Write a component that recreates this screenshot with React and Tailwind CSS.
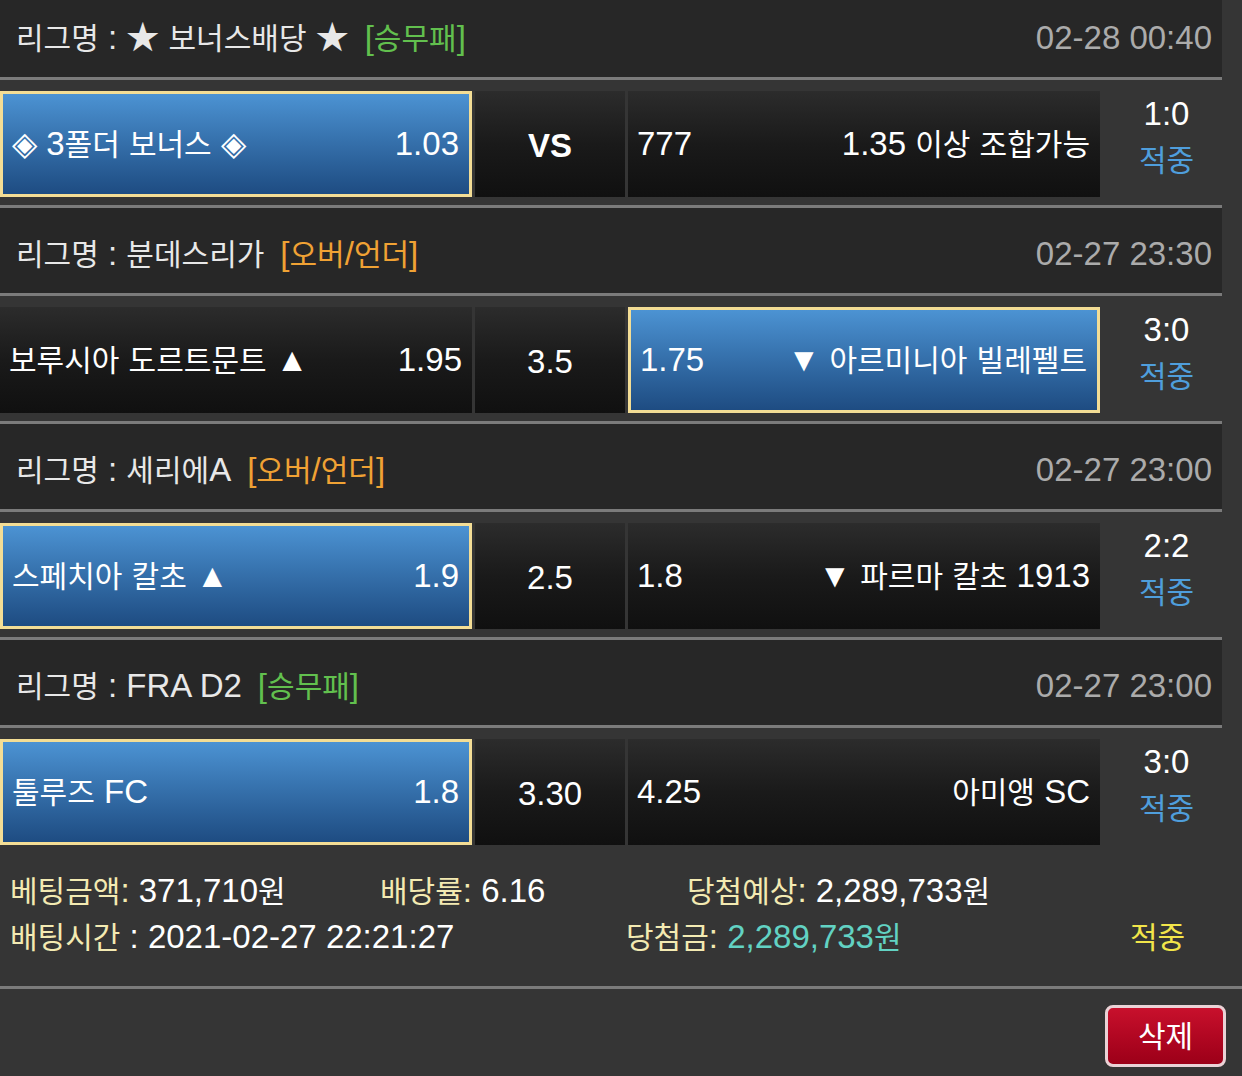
import React from "react";

const blocks = [
  {
    league: "★ 보너스배당 ★",
    type: "[승무패]",
    typeClass: "text-[#62c04e]",
    date: "02-28 00:40",
    home: "◈ 3폴더 보너스 ◈",
    homeOdd: "1.03",
    mid: "VS",
    awayOdd: "777",
    away: "1.35 이상 조합가능",
    score: "1:0",
    pick: "home",
  },
  {
    league: "분데스리가",
    type: "[오버/언더]",
    typeClass: "text-[#f0a234]",
    date: "02-27 23:30",
    home: "보루시아 도르트문트 ▲",
    homeOdd: "1.95",
    mid: "3.5",
    awayOdd: "1.75",
    away: "▼ 아르미니아 빌레펠트",
    score: "3:0",
    pick: "away",
  },
  {
    league: "세리에A",
    type: "[오버/언더]",
    typeClass: "text-[#f0a234]",
    date: "02-27 23:00",
    home: "스페치아 칼초 ▲",
    homeOdd: "1.9",
    mid: "2.5",
    awayOdd: "1.8",
    away: "▼ 파르마 칼초 1913",
    score: "2:2",
    pick: "home",
  },
  {
    league: "FRA D2",
    type: "[승무패]",
    typeClass: "text-[#62c04e]",
    date: "02-27 23:00",
    home: "툴루즈 FC",
    homeOdd: "1.8",
    mid: "3.30",
    awayOdd: "4.25",
    away: "아미앵 SC",
    score: "3:0",
    pick: "home",
  },
];

// hangul runs a bit smaller so widths come close to the narrow iOS glyphs
const Ko = ({ children }) => {
  const parts = String(children).split(/([\uAC00-\uD7A3]+)/);
  return parts.map((p, i) =>
    /[\uAC00-\uD7A3]/.test(p) ? (
      <span key={i} className="text-[30px]">
        {p}
      </span>
    ) : (
      <React.Fragment key={i}>{p}</React.Fragment>
    )
  );
};

const Cell = ({ active, left, right, className = "" }) => (
  <div
    className={
      "flex h-[106px] items-center justify-between text-white " +
      (active
        ? "border-[3px] border-[#f3dd95] bg-linear-to-b from-[#4c93d3] to-[#1e4c82] pl-[9px] pr-[10px] "
        : "bg-linear-to-b from-[#2c2c2c] via-[#1a1a1a] to-[#101010] pl-[9px] pr-[10px] ") +
      className
    }
  >
    <span>
      <Ko>{left}</Ko>
    </span>
    <span>
      <Ko>{right}</Ko>
    </span>
  </div>
);

const Sep = () => <div className="h-[3px] w-[1222px] bg-[#7b7b7b]" />;

const Block = ({ b, last }) => (
  <div>
    {/* league header */}
    <div className="flex h-[85px] w-[1222px] items-center justify-between bg-[#272727] pl-4 pr-[10px] pt-[7px]">
      <div className="text-[#e8e8e8]">
        <Ko>{"리그명 : " + b.league}</Ko>
        <span className={"ml-4 " + b.typeClass}>
          <Ko>{b.type}</Ko>
        </span>
      </div>
      <div className="text-[#ababab]">{b.date}</div>
    </div>
    <Sep />

    {/* match row */}
    <div className="flex h-[125px] w-[1222px] items-start gap-[3px] pt-[11px]">
      <Cell active={b.pick === "home"} left={b.home} right={b.homeOdd} className="w-[472px]" />
      <div className="flex h-[106px] w-[150px] items-center justify-center bg-linear-to-b from-[#2c2c2c] via-[#1a1a1a] to-[#101010] pt-1 text-white">
        <span className={b.mid === "VS" ? "font-bold" : ""}>{b.mid}</span>
      </div>
      <Cell active={b.pick === "away"} left={b.awayOdd} right={b.away} className="w-[472px]" />
      <div className="flex flex-1 flex-col items-center pl-2 leading-[46px]">
        <span className="text-white">{b.score}</span>
        <span className="text-[#4f9edc]">
          <Ko>적중</Ko>
        </span>
      </div>
    </div>
    {!last && <Sep />}
  </div>
);

export default function App() {
  return (
    <div className="h-[1076px] w-[1242px] overflow-hidden bg-[#353535] font-['Liberation_Sans','Noto_Sans_CJK_KR',sans-serif] text-[33px]">
      <div className="-mt-2">
        {blocks.map((b, i) => (
          <Block key={i} b={b} last={i === blocks.length - 1} />
        ))}

        {/* summary */}
        <div className="h-[133px] pt-[15px] leading-[45px]">
          <div className="flex">
            <div className="w-[380px] pl-[10px]">
              <span className="text-[#f3eab2]">
                <Ko>베팅금액:</Ko>
              </span>
              <span className="text-white">
                {" 371,710"}
                <Ko>원</Ko>
              </span>
            </div>
            <div className="w-[307px]">
              <span className="text-[#f3eab2]">
                <Ko>배당률:</Ko>
              </span>
              <span className="text-white"> 6.16</span>
            </div>
            <div>
              <span className="text-[#f3eab2]">
                <Ko>당첨예상:</Ko>
              </span>
              <span className="text-white">
                {" 2,289,733"}
                <Ko>원</Ko>
              </span>
            </div>
          </div>
          <div className="flex">
            <div className="w-[626px] pl-[10px]">
              <span className="text-[#f3eab2]">
                <Ko>배팅시간</Ko>
              </span>
              <span className="text-white"> : 2021-02-27 22:21:27</span>
            </div>
            <div className="w-[504px]">
              <span className="text-[#f3eab2]">
                <Ko>당첨금:</Ko>
              </span>
              <span className="text-[#62d2c3]">
                {" 2,289,733"}
                <Ko>원</Ko>
              </span>
            </div>
            <div className="text-[#f2e54a]">
              <Ko>적중</Ko>
            </div>
          </div>
        </div>
        <div className="h-[3px] w-full bg-[#7b7b7b]" />

        <div className="flex justify-end pr-4 pt-4">
          <button className="flex h-[62px] w-[121px] items-center justify-center rounded-lg border-[3px] border-[#ead2d6] bg-linear-to-b from-[#c8102c] to-[#9c0018] text-white">
            <Ko>삭제</Ko>
          </button>
        </div>
      </div>
    </div>
  );
}
